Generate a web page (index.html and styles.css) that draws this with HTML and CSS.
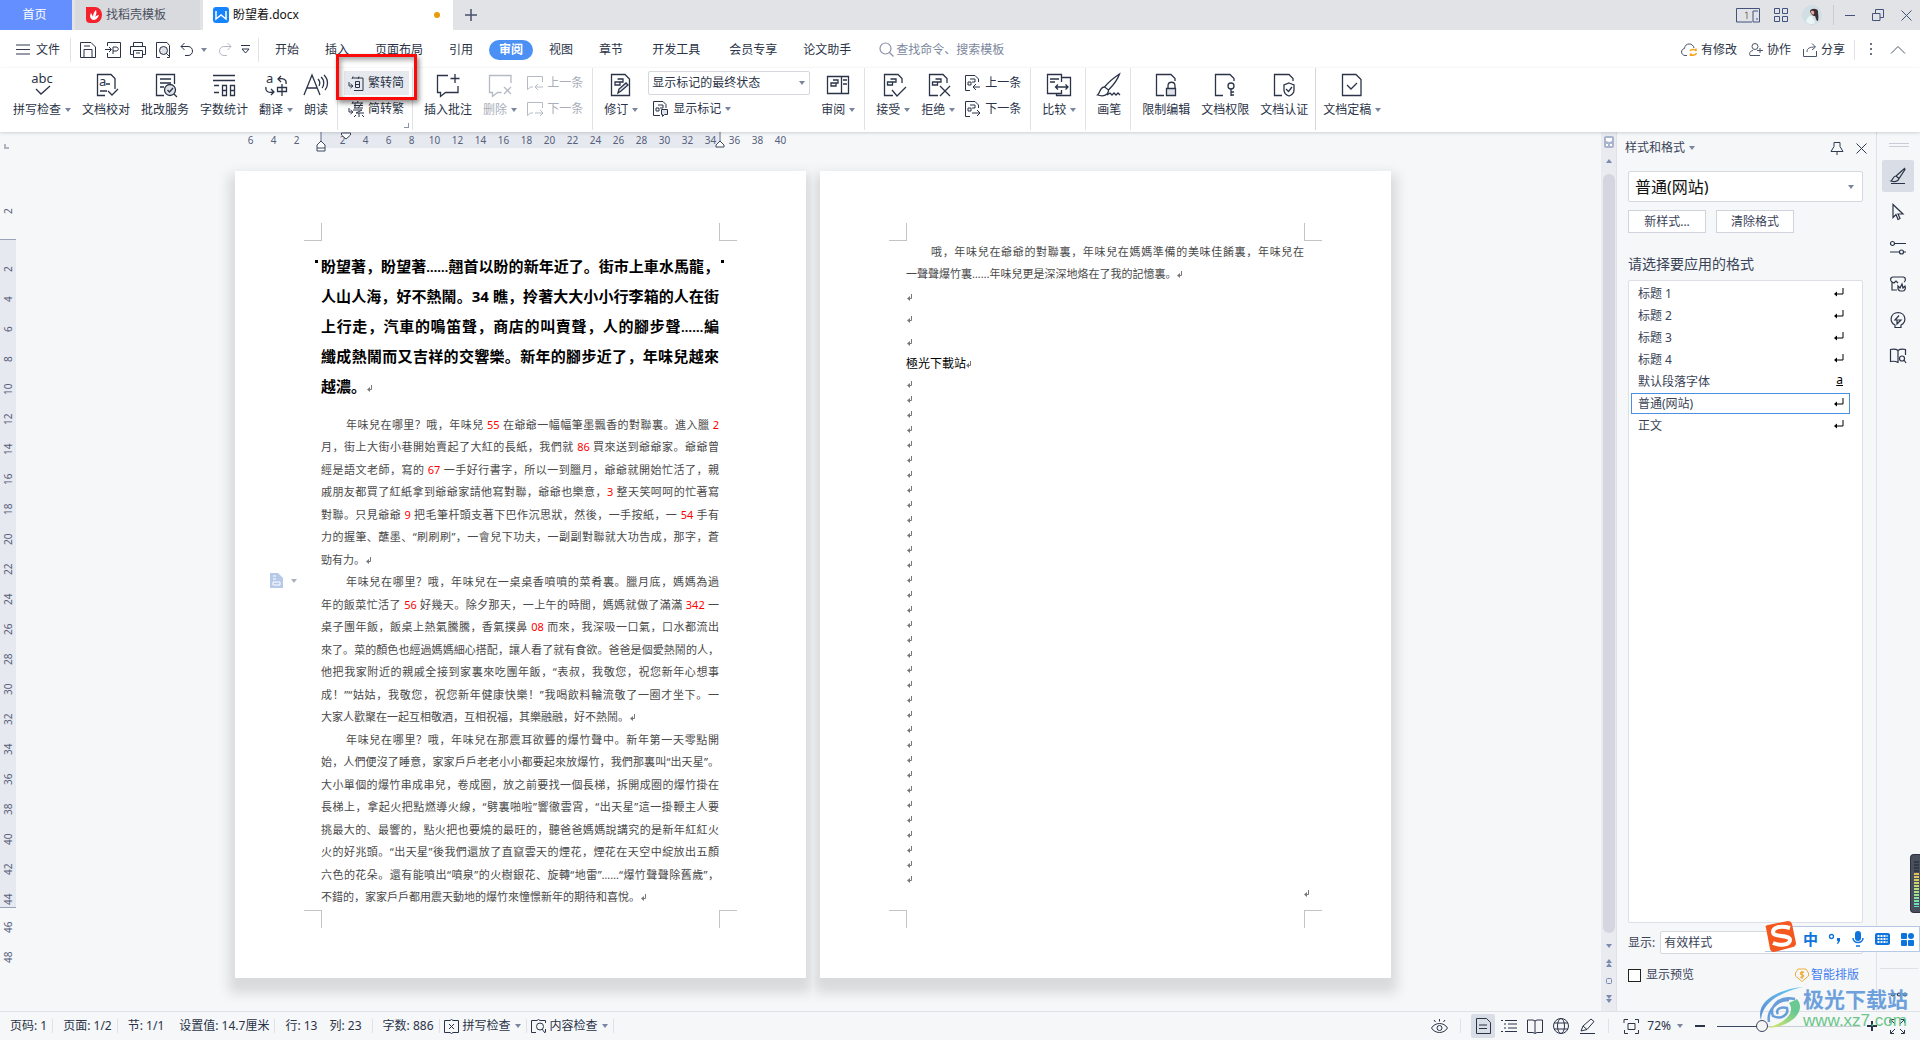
FILE: index.html
```html
<!DOCTYPE html>
<html lang="zh-CN">
<head>
<meta charset="utf-8">
<title>盼望着.docx</title>
<link rel="stylesheet" href="styles.css">
</head>
<body>
<svg class="defs" aria-hidden="true">
  <symbol id="ret" viewBox="0 0 6 7"><path d="M4.500 0v4.500H2" fill="none" stroke="currentColor"/><path d="M0 4.500l3-2.500v5z" fill="currentColor"/></symbol>
  <symbol id="enter" viewBox="0 0 10 9"><path d="M9 0v6H2" fill="none" stroke="#000"/><path d="M0 6l3-2.500v5z" fill="#000"/></symbol>
  <symbol id="page-open" viewBox="0 0 24 24"><path d="M12 22.500H3.500v-21H17l4 4V10M6.500 9h5v3h-5zM9.500 6H15v3h-3" fill="none" stroke="currentColor" stroke-width="1.300"/></symbol>
  <symbol id="page-blank" viewBox="0 0 24 24"><path d="M10 22.500H2.500v-21H17l4 4V8" fill="none" stroke="currentColor" stroke-width="1.300"/></symbol>
</svg>

<header class="titlebar">
  <button class="tab home">首页</button>
  <button class="tab template"><svg width="16" height="16" viewBox="0 0 16 16"><path d="M0 0h9a7 8 0 0 1 0 16H4a4 4 0 0 1-4-4z" fill="#f5222d"/><path d="M7 13C3 11 4 8 5 6c1 2 2 3 2 4 0-3 1-5 3-7 1 3 0 5-1 7 1-1 2-2 4-2-1 3-3 5-6 5z" fill="#fff"/></svg>找稻壳模板</button>
  <button class="tab current"><svg width="16" height="16" viewBox="0 0 16 16"><rect width="16" height="16" rx="3" fill="#1684fc"/><path d="M3 4v8l5-4 5 4V4" fill="none" stroke="#fff" stroke-width="1.500"/></svg>盼望着.docx<i class="dirty"></i></button>
  <button class="bare plus" aria-label="新建"><svg width="12" height="12" viewBox="0 0 12 12"><path d="M6 0v12M0 6h12" stroke="#48506a" stroke-width="1.500"/></svg></button>
  <div class="window-tools">
    <svg width="24" height="15" viewBox="0 0 24 15" fill="none" stroke="#43527a"><path d="M16 14H.5V.5h23V14H17V3h5M20 11h2"/><path d="M9 5l2-1v7" stroke="#7a7464"/></svg>
    <svg width="14" height="14" viewBox="0 0 14 14" fill="none" stroke="#43527a"><path d="M.5.500h5v5h-5zM8.500.5h5v5h-5zM.5 8.500h5v5h-5zM8.500 8.500h5v5h-5z"/></svg>
    <svg width="20" height="20" viewBox="0 0 20 20"><circle cx="10" cy="10" r="10" fill="#cfdfe3"/><path d="M8 6c1-3 7-3 8 0 0 4 1 5 0 10-2 0-2-3-3-5-2 0-4-1-5-5z" fill="#3b2c36"/><path d="M9 6c2-1 4 0 3 3-1 1-3 1-3-3z" fill="#e6b09a"/><path d="M4 17c1-5 3-6 6-6l3 7c-4 2-6 1-9-1z" fill="#e9f5f7"/></svg>
    <i class="rule"></i>
    <svg width="10" height="10" viewBox="0 0 10 10"><path d="M0 5.500h10" stroke="#43527a"/></svg>
    <svg width="12" height="12" viewBox="0 0 12 12" fill="none" stroke="#43527a"><path d="M.5 4.500h7.500v7H.5zM3.500 4V.5h8v8H8"/></svg>
    <svg width="11" height="11" viewBox="0 0 11 11"><path d="M.5.500l10 10M10.500.5l-10 10" stroke="#43527a"/></svg>
  </div>
</header>

<nav class="menubar">
  <button class="bare file"><svg width="14" height="11" viewBox="0 0 14 11"><path d="M0 1h14M0 5.500h14M0 10h14" stroke="#2f3a50"/></svg>文件</button>
  <i class="rule"></i>
  <div class="quick">
    <svg width="16" height="16" viewBox="0 0 16 16"><path d="M.5 15.500V.5H11l4.500 4.500v10.500zM4 15V7.500h8V15M4 4h6"/></svg>
    <svg width="16" height="16" viewBox="0 0 16 16"><path d="M2.500 4V.5h13v15h-13V11M0 7.500h6M4 5l2.500 2.500L4 10M8 12V5h3c3 0 3 4 0 4H8"/></svg>
    <svg width="16" height="16" viewBox="0 0 16 16"><path d="M3.500 4V.5h9V4M3 12.500H.5v-8h15v8H13M3.500 8.500h9v7h-9zM6 11h4"/></svg>
    <svg width="16" height="16" viewBox="0 0 16 16"><path d="M5 15.500H1.500V.5H12l2.500 3v12H12"/><circle cx="8.500" cy="8.500" r="4" fill="#dfe2e8"/><path d="M11.500 11.500l3.500 3.500"/></svg>
    <svg width="16" height="16" viewBox="0 0 16 16"><path d="M4.500 1L1 4.500 4.500 8M1 4.500h7c6 0 6 9 0 9H5"/></svg>
    <i class="caret"></i>
    <svg class="off" width="16" height="16" viewBox="0 0 16 16"><path d="M11.500 1L15 4.500 11.500 8M15 4.500H8c-6 0-6 9 0 9h3"/></svg>
    <svg width="9" height="9" viewBox="0 0 9 9"><path d="M0 .5h9M1 4h7L4.500 8z"/></svg>
  </div>
  <i class="rule"></i>
  <div class="menus">
    <button class="bare">开始</button><button class="bare">插入</button><button class="bare">页面布局</button><button class="bare">引用</button><button class="bare pill">审阅</button><button class="bare">视图</button><button class="bare">章节</button><button class="bare wide">开发工具</button><button class="bare wide">会员专享</button><button class="bare">论文助手</button>
  </div>
  <label class="search"><svg width="15" height="15" viewBox="0 0 15 15" fill="none" stroke="#8a93a8" stroke-width="1.200"><circle cx="6.500" cy="6.500" r="5.500"/><path d="M10.500 10.500l4 4"/></svg><input type="text" placeholder="查找命令、搜索模板" aria-label="查找命令"></label>
  <div class="share">
    <button class="bare"><svg width="17" height="14" viewBox="0 0 17 14" fill="none" stroke="#4a5468"><path d="M6 12.500H4C-.5 12-.5 6 3.500 5.500 4-.5 12-.5 13 5"/><path d="M9 8c1-2 5-2 6 0V5.500M15.500 10c-1 3-5 3-6 .5V13" stroke="#f5a31d" stroke-width="1.500"/></svg>有修改</button>
    <button class="bare"><svg width="15" height="14" viewBox="0 0 15 14" fill="none" stroke="#4a5468"><circle cx="6" cy="3.500" r="3"/><path d="M4 7.500C1 8 0 10 1 12.500h10M8 7.500h6M11 5v5"/></svg>协作</button>
    <button class="bare"><svg width="15" height="14" viewBox="0 0 15 14" fill="none" stroke="#4a5468"><path d="M.5 6v7.500h13V8M4 9c0-4 3-5 8-5M9 .5L12.500 4 9 7"/></svg>分享</button>
    <i class="rule"></i>
    <svg width="4" height="13" viewBox="0 0 4 13" fill="#6b7385"><path d="M1 0h2v2H1zM1 5h2v2H1zM1 10h2v2H1z"/></svg>
    <svg width="14" height="8" viewBox="0 0 14 8" fill="none" stroke="#4a5468"><path d="M0 7.500l7-7 7 7"/></svg>
  </div>
</nav>

<section class="ribbon" aria-label="审阅">
  <button class="tool"><svg class="ico" width="24" height="24" viewBox="0 0 24 24"><text x="12" y="10" text-anchor="middle" class="glyph">abc</text><path d="M6 16l5 5 9-8"/></svg><span class="cap">拼写检查<i class="caret"></i></span></button>
  <button class="tool"><svg class="ico" width="24" height="24" viewBox="0 0 24 24"><path d="M11 22.500H3.500v-21H17l4 4V16M6 18h7M12 11h4M14 18l4 4 6-6"/><text x="5" y="13" class="glyph">a</text></svg><span class="cap">文档校对</span></button>
  <button class="tool"><svg class="ico" width="24" height="24" viewBox="0 0 24 24"><path d="M11 22.500H3.500v-21h18V11M7 6h11M7 10h11M7 14h4"/><circle cx="17" cy="17" r="5.500" fill="#dfe2e8"/><path d="M14.500 17l2 2 3.500-4M21 21l3 3"/></svg><span class="cap">批改服务</span></button>
  <button class="tool"><svg class="ico" width="24" height="24" viewBox="0 0 24 24"><path d="M1 2.500h22M1 7.500h22M2 12.500h5M2 19.500h5M10.500 12.500h4v10h-4zM10.500 17.500h4M18.500 12.500h4v10h-4zM18.500 17.500h4"/></svg><span class="cap">字数统计</span></button>
  <button class="tool"><svg class="ico" width="24" height="24" viewBox="0 0 24 24"><text x="2" y="10" class="glyph">a</text><path d="M2 14c-1 5 3 6 8 5M7 16l3 3-3 3M22 11c1-5-3-6-8-5M17 3l-3 3 3 3M13.500 14.500h9v4h-9zM18 11v12"/></svg><span class="cap">翻译<i class="caret"></i></span></button>
  <button class="tool"><svg class="ico" width="24" height="24" viewBox="0 0 24 24"><path d="M0 22L8 2l8 20M3 15h10M14 6c2 2 2 5 1 7M17 4c4 3 3 9 1 11M20 2c5 5 4 12 1 15"/></svg><span class="cap">朗读</span></button>
  <i class="rule"></i>
  <div class="pair convert">
    <button class="row hot"><svg class="sm" width="16" height="16" viewBox="0 0 16 16"><path d="M5 3h10v12.500H6M5 1.500L4 4M11 1.500L10 4M7.500 6.500h4v6h-4zM7.500 9.500h4M1 7v4h3M2.500 9L5 11l-2.500 2"/></svg>繁转简</button>
    <button class="row"><svg class="sm" width="16" height="16" viewBox="0 0 16 16"><path d="M5 2h10M6 4.500h9M5 .5L4 3M10 0L9 2M6 7h9M7 2v5M14 2l-4 5M5 9h9l-6 3h8M11 12v4M8 14l-2 2M14 14l2 2M1 7v4h3M2.500 9L5 11l-2.500 2" stroke-width="1"/></svg>简转繁</button>
    <i class="corner"></i>
  </div>
  <i class="rule tight"></i>
  <button class="tool"><svg class="ico" width="24" height="24" viewBox="0 0 24 24"><path d="M12 2.500H1.500v17h3v4l5-4h12.500V13M19 1v9M14.500 5.500h9"/></svg><span class="cap">插入批注</span></button>
  <button class="tool off"><svg class="ico" width="24" height="24" viewBox="0 0 24 24"><path d="M23 10V2.500H1.500v17h3v4l5-4h4M16 14l7 7M23 14l-7 7"/></svg><span class="cap">删除<i class="caret"></i></span></button>
  <div class="pair">
    <button class="row off"><svg class="sm" width="16" height="16" viewBox="0 0 16 16"><path d="M15.500 7V1.500H.5v13l3-2.500H6M16 12H8M11 9l-3 3 3 3"/></svg>上一条</button>
    <button class="row off"><svg class="sm" width="16" height="16" viewBox="0 0 16 16"><path d="M15.500 7V1.500H.5v13l3-2.500H6M8 12h8M13 9l3 3-3 3"/></svg>下一条</button>
  </div>
  <i class="rule"></i>
  <button class="tool"><svg class="ico" width="24" height="24" viewBox="0 0 24 24"><path d="M2.500 1.500H16l4.500 4.500v16.500h-18zM6 9h5v3H6zM8.500 6H14v3h-3"/><path d="M9 20l1-4 7-6 2 2-7 6z" fill="#dfe2e8"/></svg><span class="cap">修订<i class="caret"></i></span></button>
  <div class="pair view">
    <div class="select"><select aria-label="显示状态"><option>显示标记的最终状态</option></select><i class="caret"></i></div>
    <button class="row"><svg class="sm" width="16" height="16" viewBox="0 0 16 16"><path d="M7 14.500H.5V.5H10l3 3V7M3 7h3v3H3zM5 4h5v3H7"/><path d="M8.500 8.500h6v5h-3l-2 2v-2h-1z" fill="#dfe2e8"/></svg>显示标记<i class="caret"></i></button>
  </div>
  <button class="tool"><svg class="ico" width="24" height="24" viewBox="0 0 24 24"><path d="M1.500 3.500h21v17h-21zM15.500 3.500v17M17 7h4M17 11h4M5 10h5v3H5zM7 7h5v3h-2"/></svg><span class="cap">审阅<i class="caret"></i></span></button>
  <i class="rule"></i>
  <button class="tool"><svg class="ico" width="24" height="24" viewBox="0 0 24 24"><use href="#page-open"/><path d="M11 17l5 6 9-9"/></svg><span class="cap">接受<i class="caret"></i></span></button>
  <button class="tool"><svg class="ico" width="24" height="24" viewBox="0 0 24 24"><use href="#page-open"/><path d="M14 13l10 10M24 13L14 23"/></svg><span class="cap">拒绝<i class="caret"></i></span></button>
  <div class="pair">
    <button class="row"><svg class="sm" width="16" height="16" viewBox="0 0 16 16"><path d="M5 15.500H.5V.5H10l3.500 3.500V7M3 7h3v3H3zM5 4h5v3H7M15 12H8M11 9l-3 3 3 3"/></svg>上一条</button>
    <button class="row"><svg class="sm" width="16" height="16" viewBox="0 0 16 16"><path d="M5 15.500H.5V.5H10l3.500 3.500V7M3 7h3v3H3zM5 4h5v3H7M7 12h8M12 9l3 3-3 3"/></svg>下一条</button>
  </div>
  <i class="rule"></i>
  <button class="tool"><svg class="ico" width="24" height="24" viewBox="0 0 24 24"><path d="M14.500 9V1.500h-14v19h14V17M14.500 4.500h9v18h-14v-2M3 6h9M3 9h5M9 14h12M11 11.500L8.500 14l2.500 2.500M18.500 11.500L21 14l-2.500 2.500"/></svg><span class="cap">比较<i class="caret"></i></span></button>
  <i class="rule"></i>
  <button class="tool"><svg class="ico" width="24" height="24" viewBox="0 0 24 24"><path d="M22.500 1c-6 4-11 8-15 13l4 3c5-5 9-10 11-16zM7.500 14c-5 0-4 6-7 8 6 2 11 0 11-5M10 22l3-2 2 2 2-2 2 2 2-2 2 2"/></svg><span class="cap">画笔</span></button>
  <i class="rule"></i>
  <button class="tool"><svg class="ico" width="24" height="24" viewBox="0 0 24 24"><use href="#page-blank"/><path d="M14 16v-3c0-5 7-5 7 0v3"/><path d="M12.500 15.500h9v7h-9z" fill="#dfe2e8"/></svg><span class="cap">限制编辑</span></button>
  <button class="tool"><svg class="ico" width="24" height="24" viewBox="0 0 24 24"><use href="#page-blank"/><circle cx="18" cy="13" r="3"/><path d="M18 16v7M18 19h3M18 22h3"/></svg><span class="cap">文档权限</span></button>
  <button class="tool"><svg class="ico" width="24" height="24" viewBox="0 0 24 24"><use href="#page-blank"/><path d="M17 10l5 2v5c0 3-2 5-5 6-3-1-5-3-5-6v-5zM14 16l2.500 2.500L20 14"/></svg><span class="cap">文档认证</span></button>
  <i class="rule strong"></i>
  <button class="tool last"><svg class="ico" width="24" height="24" viewBox="0 0 24 24"><path d="M2.500 1.500H16l5 5v16H2.500zM7 12l4 4 6-6"/></svg><span class="cap">文档定稿<i class="caret"></i></span></button>
  <div class="callout"></div>
</section>

<main class="work">
  <div class="editor">
    <div class="hruler">
      <i class="origin"></i>
      <div class="scale">
        <div class="before"><b>6</b><b>4</b><b>2</b></div>
        <div class="active"><b>2</b><b>4</b><b>6</b><b>8</b><b>10</b><b>12</b><b>14</b><b>16</b><b>18</b><b>20</b><b>22</b><b>24</b><b>26</b><b>28</b><b>30</b><b>32</b><b>34</b>
          <svg class="ind left" width="10" height="20" viewBox="0 0 10 20"><path d="M5 0v9" stroke="#5d6b8c"/><path d="M1 16v-3l4-4 4 4v3zM1 16v3h8v-3" fill="#fff" stroke="#3b4660"/></svg>
          <svg class="ind first" width="10" height="8" viewBox="0 0 10 8"><path d="M.5 1h9v2L5 7 .5 3z" fill="#fff" stroke="#3b4660"/></svg>
          <svg class="ind right" width="10" height="16" viewBox="0 0 10 16"><path d="M5 0v9" stroke="#5d6b8c"/><path d="M1 15v-2l4-4 4 4v2z" fill="#fff" stroke="#3b4660"/></svg>
        </div>
        <div class="after"><b>36</b><b>38</b><b>40</b></div>
      </div>
    </div>
    <div class="desk">
      <div class="vruler">
        <div class="before"><b>2</b></div>
        <div class="active"><b>2</b><b>4</b><b>6</b><b>8</b><b>10</b><b>12</b><b>14</b><b>16</b><b>18</b><b>20</b><b>22</b><b>24</b><b>26</b><b>28</b><b>30</b><b>32</b><b>34</b><b>36</b><b>38</b><b>40</b><b>42</b><b>44</b></div>
        <div class="after"><b>46</b><b>48</b></div>
      </div>
      <div class="pages">
        <article class="page">
          <i class="crop tl"></i><i class="crop tr"></i><i class="crop bl"></i><i class="crop br"></i>
          <i class="bullet start"></i><i class="bullet finish"></i>
          <h1 class="lead">
            <span>盼望著，盼望著<em class="dots">……</em>翹首以盼的新年近了。街市上車水馬龍，</span>
            <span>人山人海，好不熱鬧。34 瞧，拎著大大小小行李箱的人在街</span>
            <span>上行走，汽車的鳴笛聲，商店的叫賣聲，人的腳步聲<em class="dots">……</em>編</span>
            <span>纖成熱鬧而又吉祥的交響樂。新年的腳步近了，年味兒越來</span>
            <span class="end">越濃。<svg class="ret"><use href="#ret"/></svg></span>
          </h1>
          <div class="text">
            <p class="in">年味兒在哪里？哦，年味兒 <mark>55</mark> 在爺爺一幅幅筆墨飄香的對聯裏。進入臘 <mark>2</mark></p>
            <p>月，街上大街小巷開始賣起了大紅的長紙，我們就 <mark>86</mark> 買來送到爺爺家。爺爺曾</p>
            <p>經是語文老師，寫的 <mark>67</mark> 一手好行書字，所以一到臘月，爺爺就開始忙活了，親</p>
            <p>戚朋友都買了紅紙拿到爺爺家請他寫對聯，爺爺也樂意，<mark>3</mark> 整天笑呵呵的忙著寫</p>
            <p>對聯。只見爺爺 <mark>9</mark> 把毛筆杆頭支著下巴作沉思狀，然後，一手按紙，一 <mark>54</mark> 手有</p>
            <p>力的握筆、蘸墨、“刷刷刷”，一會兒下功夫，一副副對聯就大功告成，那字，蒼</p>
            <p class="end">勁有力。<svg class="ret"><use href="#ret"/></svg></p>
            <p class="in">年味兒在哪里？哦，年味兒在一桌桌香噴噴的菜肴裏。臘月底，媽媽為過</p>
            <p>年的飯菜忙活了 <mark>56</mark> 好幾天。除夕那天，一上午的時間，媽媽就做了滿滿 <mark>342</mark> 一</p>
            <p>桌子團年飯，飯桌上熱氣騰騰，香氣撲鼻 <mark>08</mark> 而來，我深吸一口氣，口水都流出</p>
            <p>來了。菜的顏色也經過媽媽細心搭配，讓人看了就有食欲。爸爸是個愛熱鬧的人，</p>
            <p>他把我家附近的親戚全接到家裏來吃團年飯，“表叔，我敬您，祝您新年心想事</p>
            <p>成！”“姑姑，我敬您，祝您新年健康快樂！”我喝飲料輪流敬了一圈才坐下。一</p>
            <p class="end wide">大家人歡聚在一起互相敬酒，互相祝福，其樂融融，好不熱鬧。<svg class="ret"><use href="#ret"/></svg></p>
            <p class="in">年味兒在哪里？哦，年味兒在那震耳欲聾的爆竹聲中。新年第一天零點開</p>
            <p>始，人們便沒了睡意，家家戶戶老老小小都要起來放爆竹，我們那裏叫“出天星”。</p>
            <p>大小單個的爆竹串成串兒，卷成圈，放之前要找一個長梯，拆開成圈的爆竹掛在</p>
            <p>長梯上，拿起火把點燃導火線，“劈裏啪啦”響徹雲霄，“出天星”這一掛鞭主人要</p>
            <p>挑最大的、最響的，點火把也要燒的最旺的，聽爸爸媽媽說講究的是新年紅紅火</p>
            <p>火的好兆頭。“出天星”後我們還放了直竄雲天的煙花，煙花在天空中綻放出五顏</p>
            <p>六色的花朵。還有能噴出“噴泉”的火樹銀花、旋轉“地雷”……“爆竹聲聲除舊歲”，</p>
            <p class="end wide">不錯的，家家戶戶都用震天動地的爆竹來憧憬新年的期待和喜悅。<svg class="ret"><use href="#ret"/></svg></p>
          </div>
          <button class="bare paste" aria-label="段落布局"><svg width="13" height="15" viewBox="0 0 13 15"><path d="M0 0h8l5 5v10H0z" fill="#b7c9e8"/><path d="M3 3h3M3 6h3M3 9h7v3H3z" stroke="#fff" fill="none"/></svg><i class="caret"></i></button>
        </article>
        <article class="page">
          <i class="crop tl"></i><i class="crop tr"></i><i class="crop bl"></i><i class="crop br"></i>
          <div class="text">
            <p class="in">哦，年味兒在爺爺的對聯裏，年味兒在媽媽準備的美味佳餚裏，年味兒在</p>
            <p class="end wide">一聲聲爆竹裏……年味兒更是深深地烙在了我的記憶裏。<svg class="ret"><use href="#ret"/></svg></p>
            <p class="end"><svg class="ret"><use href="#ret"/></svg></p>
            <p class="end"><svg class="ret"><use href="#ret"/></svg></p>
            <p class="end"><svg class="ret"><use href="#ret"/></svg></p>
          </div>
          <p class="name">極光下載站<svg class="ret"><use href="#ret"/></svg></p>
          <div class="blank" id="blank"></div>
        </article>
      </div>
    </div>
  </div>

  <div class="scroll">
    <svg width="10" height="12" viewBox="0 0 10 12"><rect width="10" height="12" rx="2" fill="#aab4cc"/><path d="M2 2h6v3L5 6 2 5zM2 8h2v2H2zM6 8h2v2H6z" fill="#fff"/></svg>
    <svg class="up" width="6" height="4" viewBox="0 0 6 4"><path d="M0 4l3-4 3 4z" fill="#7b8bb0"/></svg>
    <i class="thumb"></i>
    <svg width="6" height="4" viewBox="0 0 6 4"><path d="M0 0l3 4 3-4z" fill="#7b8bb0"/></svg>
    <svg width="6" height="8" viewBox="0 0 6 8"><path d="M0 4l3-4 3 4zM0 8l3-4 3 4z" fill="#7b8bb0"/></svg>
    <svg width="6" height="6" viewBox="0 0 6 6"><rect x=".5" y=".5" width="5" height="5" rx="1" fill="none" stroke="#7b8bb0"/></svg>
    <svg width="6" height="8" viewBox="0 0 6 8"><path d="M0 0l3 4 3-4zM0 4l3 4 3-4z" fill="#7b8bb0"/></svg>
  </div>

  <aside class="panel">
    <div class="head"><span>样式和格式</span><i class="caret"></i>
      <svg class="pin" width="14" height="13" viewBox="0 0 14 13" fill="none" stroke="#2f3a50"><path d="M4 .5h6v4L13 9.500H1l3-5zM7 10v3"/></svg>
      <svg width="11" height="11" viewBox="0 0 11 11"><path d="M.5.500l10 10M10.500.5l-10 10" stroke="#2f3a50"/></svg></div>
    <div class="select style"><select aria-label="当前样式"><option>普通(网站)</option></select><i class="caret"></i></div>
    <div class="acts"><button>新样式...</button><button>清除格式</button></div>
    <h2>请选择要应用的格式</h2>
    <ul class="styles">
      <li>标题 1<svg width="10" height="9"><use href="#enter"/></svg></li>
      <li>标题 2<svg width="10" height="9"><use href="#enter"/></svg></li>
      <li>标题 3<svg width="10" height="9"><use href="#enter"/></svg></li>
      <li>标题 4<svg width="10" height="9"><use href="#enter"/></svg></li>
      <li>默认段落字体<u>a</u></li>
      <li class="sel">普通(网站)<svg width="10" height="9"><use href="#enter"/></svg></li>
      <li>正文<svg width="10" height="9"><use href="#enter"/></svg></li>
    </ul>
    <div class="show"><label for="show">显示:</label><div class="select"><select id="show"><option>有效样式</option></select></div></div>
    <div class="foot"><label><input type="checkbox">显示预览</label>
      <a href="#"><svg width="14" height="14" viewBox="0 0 14 14" fill="none" stroke="#f0ad3c"><path d="M3 1h8l2.500 4v3L7 13.500.5 8V5z"/><path d="M9 4.500C7 3.500 5 4 5.500 6l3 1.500c.5 2-2 2-3.500 1.500M7 3v8" stroke-width="1.300"/></svg>智能排版</a></div>
  </aside>

  <aside class="side">
    <i class="grip"></i>
    <button class="on" aria-label="样式"><svg width="16" height="16" viewBox="0 0 16 16"><path d="M14.500.5L6 8l3 2.500 6-9zM6 8c-3 0-3 4-5 5 3 1 7 1 8-2.500M1 15.500h14"/></svg></button>
    <button aria-label="选择"><svg width="16" height="16" viewBox="0 0 16 16"><path d="M3 .5v13l3-3 2 5 2-1-2-4.500h5z"/></svg></button>
    <button aria-label="属性"><svg width="16" height="16" viewBox="0 0 16 16"><circle cx="2.500" cy="3.500" r="2"/><circle cx="11.500" cy="12" r="2"/><path d="M5 3.500h11M0 12h9M14 12h2"/></svg></button>
    <button aria-label="素材"><svg width="16" height="16" viewBox="0 0 16 16"><path d="M2 6C0 5 0 1 3 1h10c3 0 3 4 1 5M2 6v8h5M2 6l2 1 2-2 2 2M10 15c-3-1-2-4-2-5l2 2 2-4 1 4 2-2c1 2 0 5-2 5z"/></svg></button>
    <button aria-label="灵感"><svg width="16" height="16" viewBox="0 0 16 16"><path d="M5 13C-1 10 0 1 8 .5c8 .5 9 9.500 3 12.500v2.500H5zM9 3.500L5 8h6l-4 4V8"/></svg></button>
    <button aria-label="帮助"><svg width="16" height="16" viewBox="0 0 16 16"><path d="M8 15V2.500C6 1 3 1 .5 1.500v12c3-.5 5-.5 7.500 1M8 2.500c2-1.500 5-1.500 7.500-1V7"/><circle cx="12" cy="10.500" r="2.500"/><path d="M14 12l2 3"/></svg></button>
    <div class="more"><svg width="16" height="5" viewBox="0 0 16 5"><circle cx="2" cy="2.500" r="1.500"/><circle cx="8" cy="2.500" r="1.500"/><circle cx="14" cy="2.500" r="1.500"/></svg></div>
  </aside>
</main>

<footer class="status">
  <span>页码: 1</span><i class="rule"></i>
  <span>页面: 1/2</span><i class="rule"></i>
  <span>节: 1/1</span><span class="loose">设置值: 14.7厘米</span><i class="rule"></i>
  <span>行: 13</span><span class="column">列: 23</span><i class="rule"></i>
  <span>字数: 886</span><i class="rule"></i>
  <button class="bare"><svg width="15" height="15" viewBox="0 0 15 15"><path d="M6 1.500H.5v12H6l1.500 1 1.500-1h5.500v-12H9l-1.500-1zM5 5l5 5M10 5l-5 5"/></svg>拼写检查<i class="caret"></i></button><i class="rule"></i>
  <button class="bare"><svg width="15" height="15" viewBox="0 0 15 15"><path d="M5 13.500H.5v-12H6l1.500-1 1.500 1h5.500V4M14.500 10v3.500"/><circle cx="9" cy="7.500" r="3.500"/><path d="M11 10l3 4"/></svg>内容检查<i class="caret"></i></button><i class="rule"></i>
  <div class="views">
    <svg width="17" height="15" viewBox="0 0 17 15"><path d="M.5 9C4 3 13 3 16.500 9 13 15 4 15 .5 9zM3 1l1.500 2M8.500 0v2.500M14 1l-1.500 2"/><circle cx="8.500" cy="9" r="2.500"/></svg>
    <i class="rule"></i>
    <button class="bare on" aria-label="页面视图"><svg width="15" height="16" viewBox="0 0 15 16"><path d="M.5.500h10l4 4v11H.5zM3 7h8M3 10.500h8"/></svg></button>
    <svg width="16" height="14" viewBox="0 0 16 14"><path d="M0 1.500h2M4 1.500h12M3 5h2M7 5h9M3 9h2M7 9h9M0 12.500h2M4 12.500h12"/></svg>
    <svg width="16" height="15" viewBox="0 0 16 15"><path d="M6 13.500H.5V1H6l2 1 2-1h5.500v12.500H10l-2 1zM8 2v12"/></svg>
    <svg width="16" height="16" viewBox="0 0 16 16"><circle cx="8" cy="8" r="7.500"/><ellipse cx="8" cy="8" rx="3.500" ry="7.500"/><path d="M1 5h14M1 11h14"/></svg>
    <svg width="17" height="16" viewBox="0 0 17 16"><path d="M1 15.500h15M2 13l2-5L12 1l3 2.500-7 8zM4 8l4 3.500"/></svg>
    <i class="rule"></i>
  </div>
  <div class="zoom">
    <svg width="15" height="15" viewBox="0 0 15 15"><path d="M0 4V.5h4M11 .5h3.500V4M14.500 11v3.500H11M4 14.500H.5V11M4 4.500h7v6H4z"/></svg>
    <span>72%</span><i class="caret"></i>
    <svg class="minus" width="10" height="10" viewBox="0 0 10 10"><path d="M0 5h10" stroke-width="2"/></svg>
    <input type="range" min="10" max="220" value="72" aria-label="缩放">
    <svg width="10" height="10" viewBox="0 0 10 10"><path d="M0 5h10M5 0v10" stroke-width="2"/></svg>
    <svg class="full" width="15" height="15" viewBox="0 0 15 15"><path d="M0 4V.5h4M11 .5h3.500V4M14.500 11v3.500H11M4 14.500H.5V11M1 1l4 4M14 1l-4 4M1 14l4-4M14 14l-4-4"/></svg>
  </div>
</footer>

<div class="meter"><i></i></div>
<div class="ime">
  <svg class="sogou" width="32" height="31" viewBox="0 0 32 31"><path d="M1 7Q0 4 3 4L23 0q3 0 4 3l4 19q0 3-3 4L9 31q-3 0-4-3z" fill="#f4581f"/><path d="M25 7C14 4 8 7 8 11c0 6 17 2 17 8 0 5-10 6-17 3" fill="none" stroke="#fff" stroke-width="4"/></svg>
  <b>中</b>
  <svg width="12" height="10" viewBox="0 0 12 10"><circle cx="2.500" cy="2.500" r="2" fill="none" stroke="#0d73dd" stroke-width="1.300"/><path d="M8 4h3v3l-2 3H8l1-3H8z" fill="#0d73dd"/></svg>
  <svg width="12" height="16" viewBox="0 0 12 16"><rect x="3" width="6" height="10" rx="3" fill="#0d73dd"/><path d="M1 7c0 6 10 6 10 0M4 15h4" fill="none" stroke="#0d73dd" stroke-width="1.500"/></svg>
  <svg width="15" height="12" viewBox="0 0 15 12"><rect width="15" height="12" rx="2" fill="#0d73dd"/><path d="M2.500 3h10M2.500 6h10M2.500 9h10" stroke="#fff" stroke-width="2" stroke-dasharray="2 1"/></svg>
  <svg width="13" height="13" viewBox="0 0 13 13" fill="#0d73dd"><rect width="6" height="6" rx="1"/><circle cx="10" cy="3" r="3"/><rect y="7" width="6" height="6" rx="1"/><rect x="7" y="7" width="6" height="6" rx="1"/></svg>
</div>
<div class="brand">
  <svg width="44" height="42" viewBox="0 0 44 42"><defs><linearGradient id="g1" x1="1" y1="0" x2="0" y2="1"><stop offset="0" stop-color="#55c8f5"/><stop offset="1" stop-color="#4a7fcb"/></linearGradient><linearGradient id="g2" x1="1" y1="0" x2="0" y2="1"><stop offset=".3" stop-color="#5cc489"/><stop offset="1" stop-color="#e3ea52"/></linearGradient></defs><path d="M44 0C20 2-4 14 2 33c1-15 15-27 42-33z" fill="url(#g1)"/><path d="M38 12c10 12-6 28-29 29 16-5 28-15 21-25z" fill="url(#g2)"/><path d="M36 12C20 8 10 20 14 29c8 4 16-1 14-8-7-2-12 2-9 6M10 35c-2-10 6-22 20-22" fill="none" stroke="#5a95d8" stroke-width="2.500"/></svg>
  <div><strong>极光下载站</strong><span>www.xz7.com</span></div>
</div>
<script src="script.js"></script>
</body>
</html>
```
FILE: script.js
```js
// Empty paragraphs that fill the rest of the second page; the last one is right-aligned.
const mark = '<svg class="ret"><use href="#ret"/></svg>';
const blank = document.getElementById('blank');
for (let i = 0; i < 35; i++) {
  const p = document.createElement('p');
  p.innerHTML = mark;
  blank.append(p);
}
```
FILE: styles.css
```css
* { box-sizing: border-box; }
body {
  margin: 0;
  height: 100vh;
  display: flex;
  flex-direction: column;
  overflow: hidden;
  font: 12px/16px "Noto Sans", "Noto Sans CJK SC", sans-serif;
  color: #2a3347;
  background: #f5f7f9;
}
svg { display: block; flex: none; overflow: visible; }
button, input, select { font: inherit; color: inherit; }
p, h1, h2, ul { margin: 0; padding: 0; }
i { display: block; flex: none; }
.defs { position: absolute; width: 0; height: 0; }
.bare { display: flex; align-items: center; gap: 5px; border: 0; padding: 0; background: none; white-space: nowrap; }
.rule { width: 1px; background: #e0e2e7; }
.caret { border: 3px solid transparent; border-top: 4px solid #7a86a0; border-bottom: 0; }

/* title bar */
.titlebar { display: flex; height: 30px; flex: none; background: #e1e3e7; }
.tab { display: flex; align-items: center; gap: 4px; border: 0; padding: 0 12px; }
.home { width: 72px; padding: 0 15px 0 12px; justify-content: center; margin-right: 3px; background: #638fff; color: #fff; }
.template { width: 125px; margin-right: 3px; padding: 0 11px; background: #d9dade; color: #4a5060; }
.current { width: 250px; padding: 0 10px; background: #fff; color: #111; }
.dirty { width: 6px; height: 6px; margin-left: auto; margin-right: 3px; border-radius: 50%; background: #e89b0c; }
.plus { margin-left: 12px; }
.window-tools { display: flex; align-items: center; gap: 14px; margin-left: auto; padding-right: 8px; }
.window-tools .rule { height: 20px; margin: 0 -3px; background: #c8cbd2; }
.window-tools svg:nth-last-child(-n+2) { margin-left: 3px; }

/* menu row */
.menubar { display: flex; align-items: center; height: 38px; flex: none; padding: 1px 0 0 16px; background: #fff; }
.menubar .rule { height: 24px; }
.file { gap: 6px; margin-right: 10px; }
.quick { display: flex; align-items: center; gap: 9px; padding: 0 8px 0 9px; }
.quick svg { fill: none; stroke: #2a3347; }
.quick .caret { margin: 0 0 0 -4px; }
.quick .off { stroke: #b5bac4; }
.menus { display: flex; align-items: center; gap: 26px; padding-left: 16px; }
.menus .wide { margin-left: 3px; }
.menus .pill { padding: 2px 10px; margin: 0 -10px; border-radius: 10px; background: #4a90f5; color: #fff; font-weight: 700; }
.search { display: flex; align-items: center; gap: 2px; margin-left: 28px; }
.search input { width: 120px; border: 0; padding: 0; outline: 0; background: none; }
.search input::placeholder { color: #7b879e; }
.share { display: flex; align-items: center; gap: 12px; margin-left: auto; padding-right: 15px; }
.share .bare { gap: 3px; }
.share .rule { height: 20px; margin: 0 2px 0 -3px; }
.share > svg:last-child { margin-left: 6px; }

/* ribbon */
.ribbon { position: relative; z-index: 2; display: flex; height: 64px; flex: none; background: #fff; box-shadow: 0 1px 3px rgba(0, 0, 0, .16); padding-left: 2px; }
.ribbon > .rule { height: 62px; margin-left: 9px; }
.ribbon > .rule.tight { margin-left: 3px; }
.ribbon > .rule.strong { margin: 0 -4px 0 7px; background: #d3d6dd; }
.tool { display: flex; flex-direction: column; align-items: center; gap: 5px; margin-left: 11px; border: 0; padding: 5px 0 0; background: none; height: 56px; white-space: nowrap; }
.cap { display: flex; align-items: center; }
.cap .caret { margin-left: 4px; }
.ico, .sm { fill: none; stroke: #2a3347; stroke-width: 1.3px; color: #2a3347; }
.sm { stroke-width: 1px; }
.glyph { font: 13px "Noto Sans", sans-serif; fill: #2a3347; stroke: none; }
.off { color: #a9aeb9; }
.off .ico, .off .sm { stroke: #b5bac4; }
.pair { display: flex; flex-direction: column; gap: 2px; margin-left: 10px; padding-top: 3px; }
.row { display: flex; align-items: center; gap: 4px; height: 24px; border: 0; padding: 0; background: none; white-space: nowrap; }
.convert { position: relative; width: 65px; margin-left: 6px; }
.convert .row { padding: 0 4px; }
.convert .hot { background: #e6e9ee; }
.corner { position: absolute; right: 0; bottom: 4px; width: 5px; height: 5px; border: solid #8a93a8; border-width: 0 1px 1px 0; }
.view .row { padding-left: 5px; }
.select { position: relative; display: flex; align-items: center; border: 1px solid #d5d8df; border-radius: 2px; background: #fff; }
.select select { width: 100%; appearance: none; border: 0; padding: 0 3px; background: none; outline: 0; }
.select .caret { position: absolute; right: 4px; }
.view .select { width: 162px; height: 24px; }
.callout { position: absolute; left: 336px; top: -14px; width: 81px; height: 46px; border: 3px solid #fb0a0a; box-shadow: 2px 3px 5px rgba(0, 0, 0, .45), inset 2px 3px 5px rgba(0, 0, 0, .35); }

/* workspace */
.work { display: flex; flex: 1; min-height: 0; }
.editor { display: flex; flex-direction: column; flex: 1; min-width: 0; }
.hruler { position: relative; display: flex; justify-content: center; height: 16px; flex: none; padding-left: 25px; font-size: 10px; color: #566079; }
.origin { position: absolute; left: 4px; top: 12px; width: 5px; height: 5px; border: solid #b0b5c2; border-width: 0 0 2px 2px; }
.scale { display: flex; width: 1156px; }
.scale b, .vruler b { display: block; flex: none; font-weight: 400; text-align: center; }
.scale b { width: 23px; }
.scale .before { display: flex; width: 86px; padding-left: 4px; }
.scale .active { position: relative; display: flex; width: 398px; padding-left: 10px; background: #e6e9f0; }
.scale .after { display: flex; padding-left: 4px; }
.ind { position: absolute; top: 0; }
.ind.left { left: -5px; }
.ind.first { left: 20px; }
.ind.right { right: -6px; }
.desk { display: flex; flex: 1; min-height: 0; overflow: hidden; }
.vruler { display: flex; flex-direction: column; width: 16px; flex: none; padding-top: 7px; font-size: 10px; line-height: 16px; color: #566079; }
.vruler b { width: 16px; height: 30px; writing-mode: vertical-rl; transform: rotate(180deg); }
.vruler .before { height: 84px; padding-top: 41px; }
.vruler .active { height: 669px; padding-top: 14px; border: solid #9aa3b8; border-width: 1px 0; background: #e6e9f0; }
.vruler .after { padding-top: 4px; }
.pages { display: flex; flex: 1; justify-content: center; align-items: flex-start; gap: 14px; padding: 23px 0 0 9px; }
.page { position: relative; width: 571px; min-height: 807px; flex: none; padding: 70px 87px 68px 86px; background: #fff; box-shadow: 0 9px 12px 6px rgba(0, 0, 0, .12); clip-path: inset(-20px -7px -40px -20px); }
.page + .page { clip-path: inset(-20px -20px -40px -7px); }
.crop { position: absolute; width: 18px; height: 18px; border: 0 solid #c4c4c4; }
.tl { left: 69px; top: 52px; border-width: 0 1px 1px 0; }
.tr { right: 69px; top: 52px; border-width: 0 0 1px 1px; }
.bl { left: 69px; bottom: 50px; border-width: 1px 1px 0 0; }
.br { right: 69px; bottom: 50px; border-width: 1px 0 0 1px; }
.bullet { position: absolute; top: 89px; width: 3px; height: 3px; background: #000; }
.start { left: 80px; }
.finish { right: 82px; }
.lead { padding: 10px 0 13px; font-size: 15px; line-height: 30px; color: #000; }
.lead span, .text p { display: block; white-space: nowrap; text-align: justify; text-align-last: justify; }
.lead span { height: 30px; }
.lead .end, .text .end { text-align-last: left; }
.dots { font-style: normal; font-size: 13px; line-height: 16px; }
.text { font-size: 11px; line-height: 22px; color: #4a4a4a; }
.text p { height: 22px; }
.text p:nth-child(even) { height: 23px; }
.text .in { padding-left: 25px; }
mark { background: none; color: #f00; }
.ret { display: inline-block; width: 6px; height: 7px; margin-left: 4px; color: #777; }
.end .ret:only-child, .blank .ret { margin-left: 1px; }
.name { height: 23px; line-height: 22px; color: #000; }
.name .ret { margin-left: 0; }
.blank p { height: 15px; line-height: 15px; font-size: 11px; }
.blank p:last-child { display: flex; justify-content: flex-end; align-items: center; margin-right: -6px; }
.paste { position: absolute; left: 35px; top: 402px; gap: 8px; }
.paste .caret { border-top-color: #aab0bb; }

.scroll { display: flex; flex-direction: column; align-items: center; gap: 11px; width: 15px; flex: none; padding: 4px 0 8px; background: #e9ebf0; }
.thumb { flex: 1; width: 12px; border-radius: 6px; background: #d3d6df; }

/* style panel */
.panel { display: flex; flex-direction: column; width: 261px; flex: none; padding: 0 13px 0 11px; border: solid #dfe1e7; border-width: 0 1px; color: #3a4358; }
.head { display: flex; align-items: center; gap: 4px; height: 32px; margin: 0 -4px 7px -3px; }
.pin { margin: 0 8px 0 auto; }
.style { height: 31px; }
.style select { padding-left: 6px; font-size: 16px; color: #111; }
.style .caret { right: 8px; }
.acts { display: flex; gap: 10px; margin: 8px 0 19px; }
.acts button { width: 78px; height: 23px; border: 1px solid #d0d4dc; padding: 0; background: #fff; }
.panel h2 { height: 28px; line-height: 24px; font-size: 14px; font-weight: 400; }
.styles { flex: 1; list-style: none; border: 1px solid #dcdfe5; border-radius: 2px; background: #fff; padding: 2px 12px 0 2px; }
.styles li { display: flex; justify-content: space-between; height: 22px; line-height: 20px; padding: 0 5px 0 6px; border: 1px solid transparent; }
.styles li svg { margin-top: 4px; }
.styles .sel { height: 21px; line-height: 19px; margin-bottom: 1px; border-color: #4a90e2; }
.styles u { color: #000; padding-right: 1px; line-height: 16px; }
.show { display: flex; align-items: center; gap: 5px; margin: 8px 0 11px; }
.show .select { flex: 1; height: 23px; }
.foot { display: flex; justify-content: space-between; align-items: center; height: 20px; margin-bottom: 26px; }
.foot label, .foot a { display: flex; align-items: center; gap: 5px; }
.foot input { appearance: none; width: 13px; height: 13px; margin: 0; border: 1px solid #222; background: #fff; }
.foot a { gap: 2px; margin-right: 4px; color: #3f7df0; text-decoration: none; }

/* tool rail */
.side { display: flex; flex-direction: column; align-items: center; gap: 4px; width: 43px; flex: none; padding: 11px 0 14px; }
.grip { width: 20px; height: 4px; margin-bottom: 9px; border: solid #c9ccd4; border-width: 1px 0; }
.side button { display: flex; align-items: center; justify-content: center; width: 32px; height: 32px; margin-right: 1px; border: 0; border-radius: 2px; padding: 0; background: none; }
.side .on { background: #d9dde5; }
.side svg { fill: none; stroke: #2a3347; stroke-width: 1.2px; }
.more { display: flex; justify-content: center; width: 38px; margin-top: auto; padding-top: 23px; border-top: 1px solid #dfe1e7; }

/* status bar */
.status { display: flex; align-items: center; gap: 10px; height: 29px; flex: none; border-top: 1px solid #dfe1e7; padding: 0 15px 0 10px; white-space: nowrap; }
.status .rule { height: 14px; margin: 0 0 0 -5px; }
.status .loose { margin-left: 5px; }
.status .column { margin-left: 2px; }
.status .column + .rule { margin-left: 0; }
.status svg { fill: none; stroke: #2a3347; }
.status > .bare { margin-left: -6px; gap: 4px; }
.views, .zoom { display: flex; align-items: center; gap: 10px; }
.views { margin-left: auto; }
.views .on { justify-content: center; width: 24px; height: 24px; margin-right: -4px; border-radius: 2px; background: #d9dde5; }
.status .views .rule { margin: 0 0 0 2px; }
.zoom { gap: 6px; margin-left: 5px; }
.zoom span { margin-left: 2px; }
.zoom .minus { margin: 0 6px; }
.zoom .full { margin-left: 7px; }
.zoom input { appearance: none; width: 144px; height: 12px; margin: 0; background: linear-gradient(90deg, #3b4660 32%, #c9cdd6 32%) center / 100% 1px no-repeat; }
.zoom input::-webkit-slider-thumb { appearance: none; width: 12px; height: 12px; border: 1px solid #3b4660; border-radius: 50%; background: #f5f5f5; }

/* floating desktop items */
.meter { position: absolute; right: 0; top: 854px; width: 10px; height: 59px; border: 1px solid #2f333f; border-right: 0; border-radius: 4px 0 0 4px; background: #4a4f5e; padding: 6px 1px 6px 3px; }
.meter i { height: 46px; background: repeating-linear-gradient(transparent 0 2px, #4a4f5e 2px 3px), linear-gradient(#333846 26%, #e5bd55 27%, #b9e07a 60%, #5fe0c4); }
.ime { position: absolute; right: 0; top: 926px; display: flex; align-items: center; gap: 11px; height: 26px; border: 1px solid #b5c9e4; border-left: 0; padding-right: 5px; background: linear-gradient(90deg, transparent 16px, #fff 16px); color: #0d73dd; }
.ime b { font-size: 15px; margin-left: -5px; }
.sogou { margin: -6px 0 0 0; }
.brand { position: absolute; right: 12px; bottom: 9px; display: flex; opacity: .9; }
.brand div { display: flex; flex-direction: column; }
.brand strong { font-size: 21px; line-height: 24px; color: #6098d8; }
.brand span { font: 17px/20px "Liberation Sans", sans-serif; color: #5cc27c; }
```
